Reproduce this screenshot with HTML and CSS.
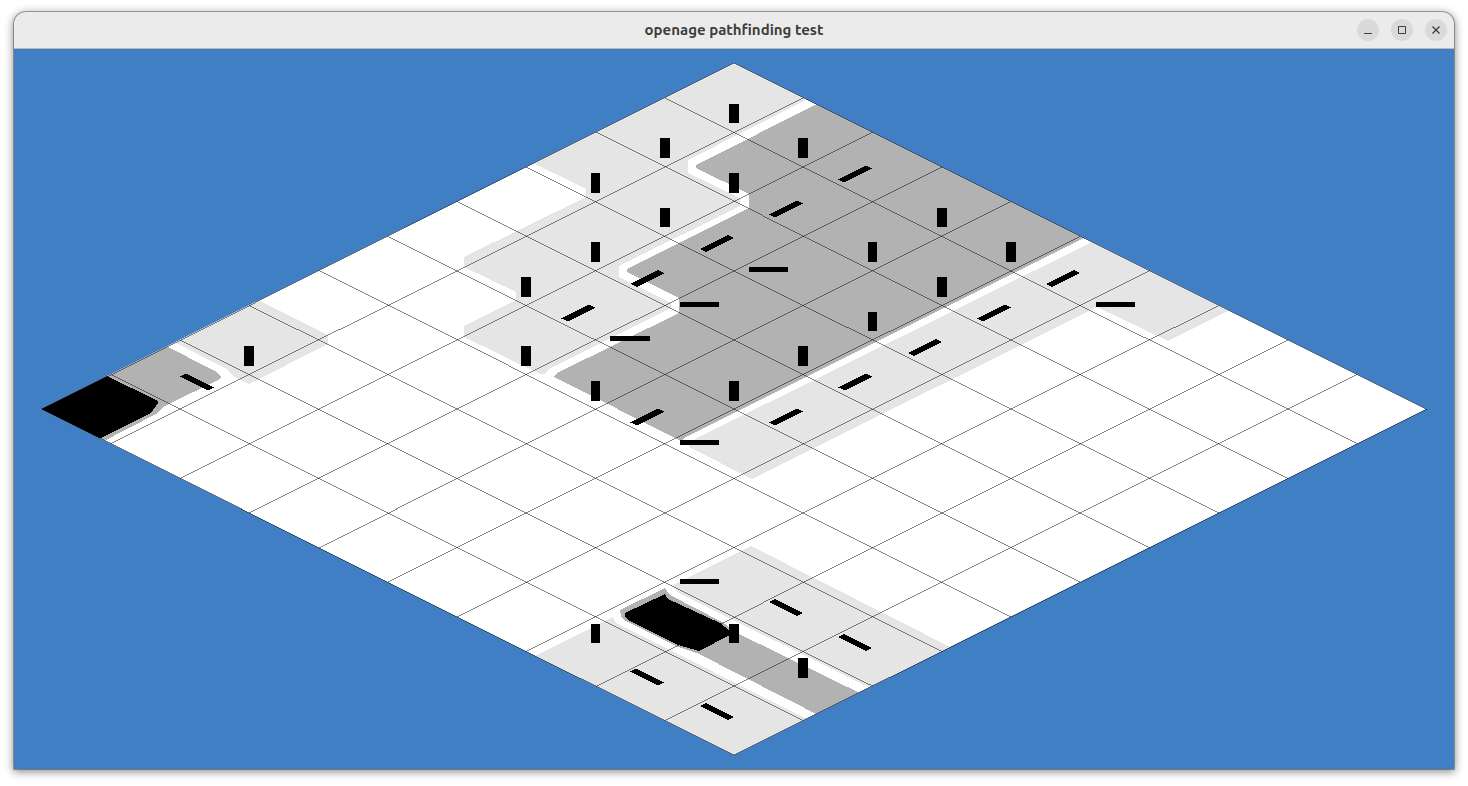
FILE: index.html
```html
<!DOCTYPE html>
<html lang="en">
<head>
<meta charset="utf-8">
<title>openage pathfinding test</title>
<link rel="stylesheet" href="styles.css">
</head>
<body>
<main class="window">
  <header class="titlebar">
    <h1 class="title">openage pathfinding test</h1>
    <div class="controls">
      <button class="control" type="button" aria-label="Minimize"><svg class="icon" viewBox="0 0 10 10"><path d="M1 8.500h8"/></svg></button>
      <button class="control" type="button" aria-label="Maximize"><svg class="icon" viewBox="0 0 10 10"><path d="M1.500 1.500h7v7h-7z"/></svg></button>
      <button class="control" type="button" aria-label="Close"><svg class="icon" viewBox="0 0 10 10"><path stroke-width="1.300" d="M1.500 1.500l7 7M8.500 1.500l-7 7"/></svg></button>
    </div>
  </header>
  <svg class="field" viewBox="14 49 1440 720" role="img" aria-label="Flow field">
    <defs>
      <clipPath id="board"><path d="M734 63L1426.500 409L734 755L41 409z"/></clipPath>
      <path id="v" d="M-4.800-9.800H4.800V9.800H-4.800z"/>
      <path id="h" d="M-19.800-2.500H19.800v5H-19.800z"/>
      <path id="u" d="M-17 5.500L10.500-8.500L17-5.500L-11 8.500z"/>
      <path id="d" d="M-17-5.500L-11-8.500L17 5.500L11 8.500z"/>
    </defs>
    <g clip-path="url(#board)" shape-rendering="crispEdges">
      <path class="free" d="M734 63L1427 409L734 756L41 409z"/>
      <g class="light">
        <path d="M734 60L812 97L688 160V173L740 198V206L619 266V277L671 303V308L549 369L544 374H540L464 337V326L516 300V292L464 267V257L586 197V189L525 159z"/>
        <path d="M1100 238L695 439L689 447L752 479L1097 307L1168 341L1240 305z"/>
        <path d="M252 297L328 335V344L249 384L233 376L227 369L168 339z"/>
        <path d="M523 662L613 617L616 623L813 722L734 765z"/>
        <path d="M751 546L673 585L677 592L880 693L960 652z"/>
      </g>
      <g class="dark">
        <path d="M825 100L696 165V168L749 194V208L627 269V272L679 298V313L557 373L554 377L681 441L686 437L1092 234z"/>
        <path d="M160 343L217 372L221 377L220 379L167 405L162 408L158 413L98 444L38 409z"/>
        <path d="M665 588L620 610L621 616L624 620L678 647L697 653L826 719L868 697L739 634L722 622L670 595z"/>
      </g>
      <g class="black">
        <path d="M103 374L158 401V403L151 413L93 442L38 409z"/>
        <path d="M665 594L625 613V616L628 620L678 645L699 651L730 635V631L720 623L668 599z"/>
      </g>
    </g>
    <path class="grid" shape-rendering="crispEdges" d="M734 63.200l692.500 346M664.750 97.800l692.500 346M595.500 132.400l692.500 346M526.250 167l692.500 346M457 201.600l692.500 346M387.750 236.200l692.500 346M318.500 270.800l692.500 346M249.250 305.400l692.500 346M180 340l692.500 346M110.750 374.600l692.500 346M41.500 409.200l692.500 346M734 63.200l-692.500 346M803.250 97.800l-692.500 346M872.500 132.400l-692.500 346M941.750 167l-692.500 346M1011 201.600l-692.500 346M1080.250 236.200l-692.500 346M1149.500 270.800l-692.500 346M1218.750 305.400l-692.500 346M1288 340l-692.500 346M1357.250 374.600l-692.500 346M1426.500 409.200l-692.500 346"/>
    <g class="black" shape-rendering="crispEdges">
      <use href="#v" x="734" y="113.500"/><use href="#v" x="665" y="148"/><use href="#v" x="803" y="148"/>
      <use href="#v" x="595.500" y="183"/><use href="#v" x="734" y="183"/><use href="#v" x="665" y="217.500"/>
      <use href="#v" x="942" y="217.500"/><use href="#v" x="595.500" y="252"/><use href="#v" x="872.500" y="252"/>
      <use href="#v" x="1011" y="252"/><use href="#v" x="526" y="287"/><use href="#v" x="942" y="287"/>
      <use href="#v" x="872.500" y="321.500"/><use href="#v" x="249" y="356"/><use href="#v" x="526" y="356"/>
      <use href="#v" x="803" y="356"/><use href="#v" x="595.500" y="391"/><use href="#v" x="734" y="391"/>
      <use href="#v" x="595.500" y="633.500"/><use href="#v" x="734" y="633.500"/><use href="#v" x="803" y="668"/>
      <use href="#u" x="855" y="174"/><use href="#u" x="786" y="209"/><use href="#u" x="717" y="243.500"/>
      <use href="#u" x="647.500" y="278.500"/><use href="#u" x="578.500" y="313"/><use href="#u" x="1063" y="278.500"/>
      <use href="#u" x="994" y="313"/><use href="#u" x="925" y="347.500"/><use href="#u" x="855.500" y="382"/>
      <use href="#u" x="786" y="417"/><use href="#u" x="647.500" y="417"/>
      <use href="#d" x="197" y="382"/><use href="#d" x="786" y="607.500"/><use href="#d" x="855" y="642.500"/>
      <use href="#d" x="647" y="677"/><use href="#d" x="717" y="711.500"/>
      <use href="#h" x="768.500" y="269.500"/><use href="#h" x="699.500" y="304.500"/><use href="#h" x="1115.500" y="304.500"/>
      <use href="#h" x="630" y="338.500"/><use href="#h" x="699.500" y="442.500"/><use href="#h" x="699.500" y="581.500"/>
    </g>
  </svg>
</main>
</body>
</html>
```
FILE: styles.css
```css
body {
  margin: 0;
  padding: 12px 14px 17px;
  background: #fff;
  font-family: Ubuntu, "Noto Sans", sans-serif;
}
.window {
  overflow: hidden;
  border-radius: 12px 12px 0 0;
  background: #407fc4;
  box-shadow: 0 0 0 1px rgba(0, 0, 0, 0.3), 0 2px 8px 1px rgba(0, 0, 0, 0.45);
}
.titlebar {
  display: grid;
  grid-template-columns: 1fr auto 1fr;
  align-items: center;
  height: 36px;
  padding: 0 7px;
  border-bottom: 1px solid #bbb8b3;
  background: #ebebeb;
}
.title {
  grid-column: 2;
  margin: 0;
  color: #3d3d3d;
  font-size: 15px;
  font-weight: 700;
  line-height: 20px;
}
.controls {
  display: flex;
  justify-content: flex-end;
  gap: 12px;
}
.control {
  display: grid;
  place-items: center;
  width: 22px;
  height: 22px;
  padding: 0;
  border: 0;
  border-radius: 50%;
  background: #dadada;
}
.icon {
  width: 10px;
  height: 10px;
  fill: none;
  stroke: #3d3d3d;
}
.field {
  display: block;
  width: 100%;
  height: auto;
}
.free {
  fill: #fff;
}
.light {
  fill: #e5e5e5;
}
.dark {
  fill: #b2b2b2;
}
.black {
  fill: #000;
}
.grid {
  fill: none;
  stroke: #000;
  stroke-opacity: 0.55;
  stroke-width: 0.88;
}
```
